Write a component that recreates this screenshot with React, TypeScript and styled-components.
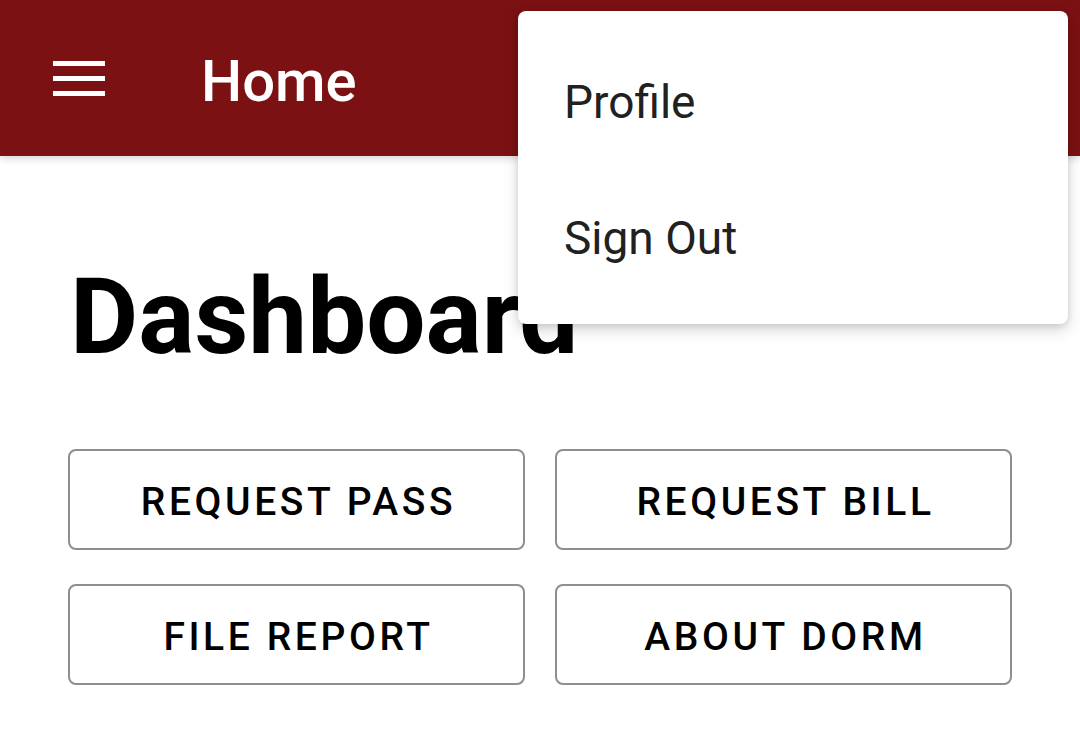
import styled, { createGlobalStyle } from "styled-components";

const GlobalStyle = createGlobalStyle`
    html, body {
        margin: 0;
        padding: 0;
        background: #ffffff;
        font-family: Roboto, "Noto Sans", sans-serif;
    }
`;

const Page = styled.div`
    position: relative;
    width: 1080px;
    height: 740px;
    overflow: hidden;
    background: #ffffff;
`;

const TopBar = styled.header`
    display: flex;
    align-items: center;
    height: 156px;
    padding-left: 53px;
    background-color: #7b1112;
    box-shadow: 0 2px 8px rgba(0, 0, 0, 0.18);
    position: relative;
    z-index: 1;
`;

const MenuButton = styled.div`
    display: flex;
    flex-direction: column;
    justify-content: space-between;
    width: 52px;
    height: 35px;

    span {
        display: block;
        height: 5px;
        background: #ffffff;
    }
`;

const BarTitle = styled.h1`
    margin: 0 0 0 96px;
    padding-top: 6px;
    font-size: 58px;
    line-height: 1;
    font-weight: 500;
    color: #ffffff;
`;

const Main = styled.main`
    padding: 109px 68px 0 68px;
`;

const Heading = styled.h2`
    margin: 0 0 79px 2px;
    font-size: 105px;
    line-height: 1;
    font-weight: 700;
    color: #000000;
`;

const ButtonGrid = styled.div`
    display: grid;
    grid-template-columns: 457px 457px;
    column-gap: 30px;
    row-gap: 34px;
`;

const ActionButton = styled.button`
    display: flex;
    align-items: center;
    justify-content: center;
    height: 101px;
    padding: 4px 0 0 4px;
    background: #ffffff;
    border: 2px solid #8e8e8e;
    border-radius: 8px;
    font-family: Roboto, "Noto Sans", sans-serif;
    font-size: 39px;
    font-weight: 500;
    letter-spacing: 3.6px;
    color: #000000;
`;

const Dropdown = styled.div`
    position: absolute;
    top: 11px;
    right: 12px;
    z-index: 2;
    width: 550px;
    padding: 20px 0 21px;
    background: #ffffff;
    border-radius: 8px;
    box-shadow: 0 6px 16px rgba(0, 0, 0, 0.16), 0 2px 6px rgba(0, 0, 0, 0.1);
`;

const DropdownItem = styled.div`
    display: flex;
    align-items: center;
    height: 136px;
    padding: 6px 0 0 46px;
    box-sizing: border-box;
    font-size: 46px;
    line-height: 1;
    color: #212121;
`;

const actions = ["REQUEST PASS", "REQUEST BILL", "FILE REPORT", "ABOUT DORM"];

export default function App() {
    return (
        <>
            <GlobalStyle />
            <Page>
                <TopBar>
                    <MenuButton>
                        <span />
                        <span />
                        <span />
                    </MenuButton>
                    <BarTitle>Home</BarTitle>
                </TopBar>
                <Main>
                    <Heading>Dashboard</Heading>
                    <ButtonGrid>
                        {actions.map((label) => (
                            <ActionButton key={label}>{label}</ActionButton>
                        ))}
                    </ButtonGrid>
                </Main>
                <Dropdown>
                    <DropdownItem>Profile</DropdownItem>
                    <DropdownItem>Sign Out</DropdownItem>
                </Dropdown>
            </Page>
        </>
    );
}
